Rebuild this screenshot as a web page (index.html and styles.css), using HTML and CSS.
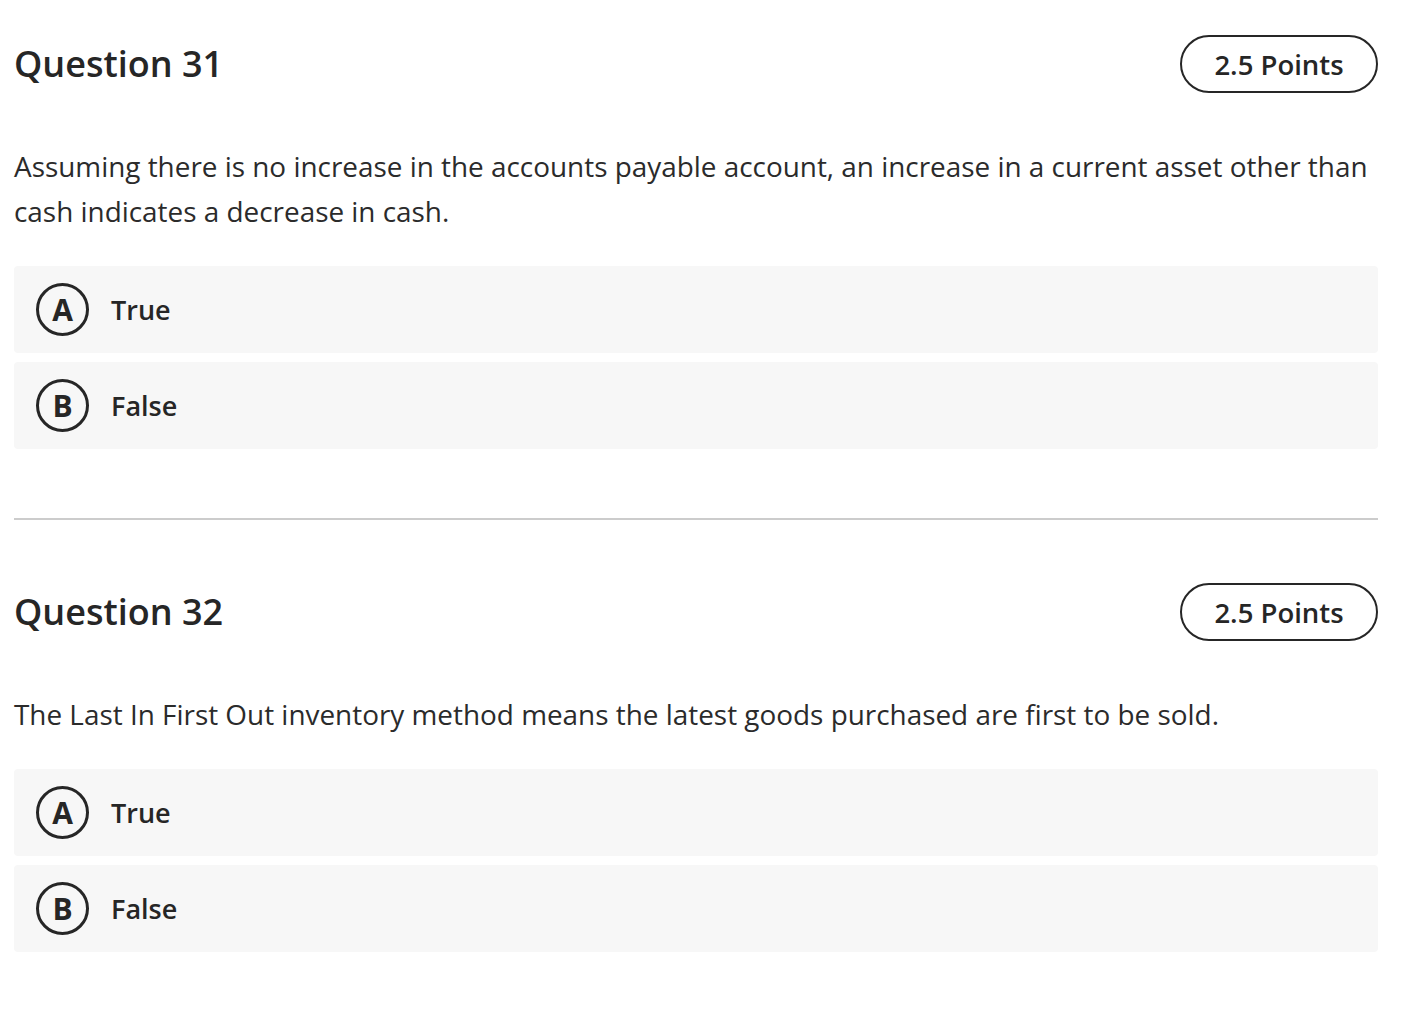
FILE: index.html
```html
<!DOCTYPE html>
<html>
<head>
<meta charset="utf-8">
<link rel="stylesheet" href="styles.css">
</head>
<body>
<div class="page">
  <section class="question">
    <div class="q-head">
      <h2 class="q-title">Question 31</h2>
      <div class="points">2.5 Points</div>
    </div>
    <p class="q-text">Assuming there is no increase in the accounts payable account, an increase in a current asset other than cash indicates a decrease in cash.</p>
    <div class="options">
      <div class="option"><span class="letter">A</span><span class="label">True</span></div>
      <div class="option"><span class="letter">B</span><span class="label">False</span></div>
    </div>
  </section>
  <section class="question">
    <div class="q-head">
      <h2 class="q-title">Question 32</h2>
      <div class="points">2.5 Points</div>
    </div>
    <p class="q-text">The Last In First Out inventory method means the latest goods purchased are first to be sold.</p>
    <div class="options">
      <div class="option"><span class="letter">A</span><span class="label">True</span></div>
      <div class="option"><span class="letter">B</span><span class="label">False</span></div>
    </div>
  </section>
</div>
</body>
</html>
```
FILE: styles.css
```css
html, body {
  margin: 0;
  padding: 0;
  background: #fff;
}
body {
  font-family: "Open Sans", "Noto Sans", sans-serif;
  color: #262626;
}
.page {
  padding: 35px 42px 0 14px;
}
.question {
  padding-bottom: 69px;
}
.question + .question {
  border-top: 2px solid #cccccc;
  padding-top: 63px;
}
.q-head {
  display: flex;
  align-items: center;
  justify-content: space-between;
  height: 58px;
}
.q-title {
  margin: 0;
  font-size: 36px;
  font-weight: 600;
  line-height: 1;
}
.points {
  box-sizing: border-box;
  height: 58px;
  width: 198px;
  border: 2px solid #262626;
  border-radius: 29px;
  display: flex;
  align-items: center;
  justify-content: center;
  font-size: 27.5px;
  font-weight: 600;
}
.q-text {
  margin: 51px 0 32px;
  font-size: 27.9px;
  line-height: 45px;
  color: #2b2b2b;
}
.options {
  display: flex;
  flex-direction: column;
  gap: 9px;
}
.option {
  height: 87px;
  background: #f7f7f7;
  border-radius: 4px;
  display: flex;
  align-items: center;
  padding-left: 22px;
}
.letter {
  box-sizing: border-box;
  width: 53px;
  height: 53px;
  border: 3px solid #262626;
  border-radius: 50%;
  display: flex;
  align-items: center;
  justify-content: center;
  font-size: 30px;
  font-weight: 700;
}
.label {
  margin-left: 22px;
  font-size: 27px;
  font-weight: 600;
}
```
